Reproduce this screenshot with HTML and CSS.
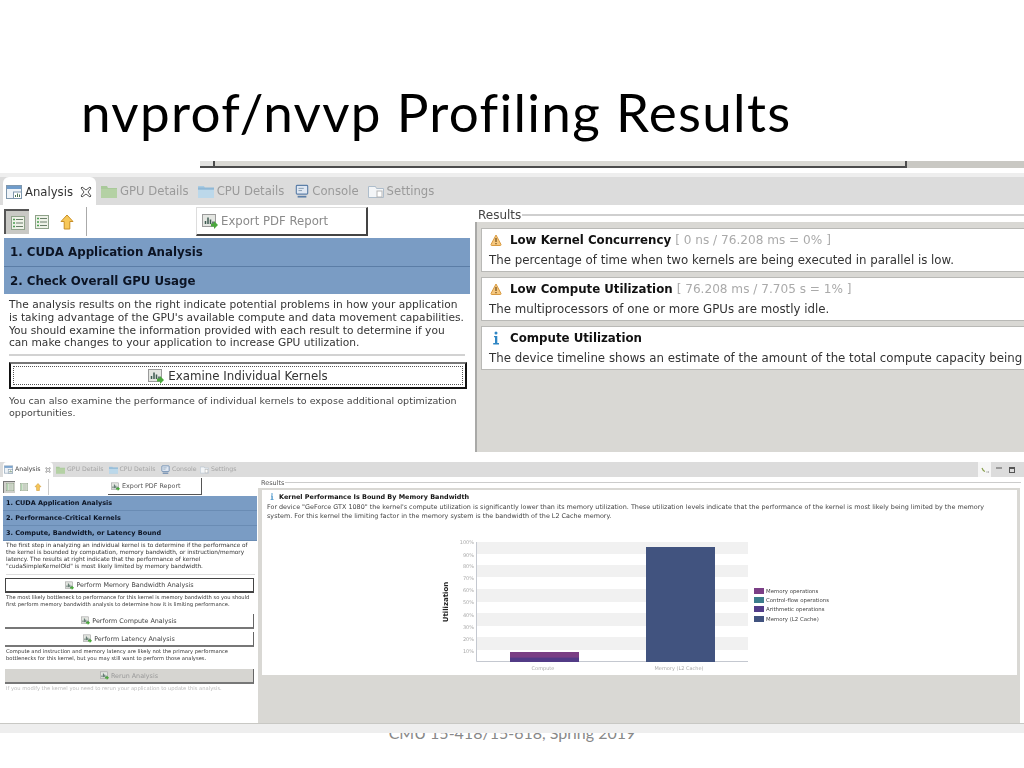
FILE: index.html
```html
<!DOCTYPE html>
<html lang="en">
<head>
<meta charset="utf-8">
<title>nvprof/nvvp Profiling Results</title>
<link rel="stylesheet" href="styles.css">
</head>
<body>
<svg class="defs" width="0" height="0" aria-hidden="true">
  <symbol id="i-chart" viewBox="0 0 16 16">
    <rect x="0.5" y="1.5" width="13" height="12" fill="#e4e6e2" stroke="#9a9a9a"/>
    <path d="M3.5 11V8M6 11V4.5M8.5 11V6.5M11 11V8.5" stroke="#3d5a50" stroke-width="1.5"/>
    <path d="M9 10.5h3V8l4 4-4 4v-2.5H9z" fill="#4aa83c"/>
  </symbol>
  <symbol id="i-tab" viewBox="0 0 16 16">
    <rect x="0.5" y="1.5" width="15" height="13" fill="#eef3f8" stroke="#7f97ad"/>
    <rect x="1" y="2" width="14" height="3" fill="#6f9ccb"/>
    <rect x="7.5" y="8" width="8" height="6.5" fill="#fff" stroke="#7f97ad"/>
    <path d="M9.5 13v-2M11.5 13V9.5M13.5 13v-2.500" stroke="#4a7050"/>
  </symbol>
  <symbol id="i-folder" viewBox="0 0 16 16">
    <path d="M0 3h6l1 2h9v10H0z" fill="#a9c99a"/>
    <rect x="0" y="6" width="16" height="9" fill="#b4d1a4"/>
  </symbol>
  <symbol id="i-cpu" viewBox="0 0 16 16">
    <path d="M0 3h6l1 2h9v10H0z" fill="#a9cbe2"/>
    <rect x="0" y="7" width="16" height="8" fill="#bcd8ea"/>
    <rect x="0" y="4.500" width="16" height="2" fill="#8fb8d6"/>
  </symbol>
  <symbol id="i-console" viewBox="0 0 16 16">
    <rect x="1.500" y="1.500" width="13" height="10" rx="1" fill="#dfe7f2" stroke="#5c7fa8" stroke-width="1.300"/>
    <path d="M4 5h6M4 7.500h4" stroke="#7f97ad"/>
    <path d="M3 14.500h10" stroke="#5c7fa8" stroke-width="2"/>
  </symbol>
  <symbol id="i-settings" viewBox="0 0 16 16">
    <path d="M0.500 3.500h7l1 2h7v9h-15z" fill="#f3f5f7" stroke="#aebdcb"/>
    <rect x="9" y="8" width="5" height="6" fill="#fff" stroke="#b5b5b5"/>
  </symbol>
  <symbol id="i-close" viewBox="0 0 12 12">
    <path d="M2 1l4 3 4-3 1 1-3 4 3 4-1 1-4-3-4 3-1-1 3-4-3-4z" fill="#fff" stroke="#555" stroke-width="1"/>
  </symbol>
  <symbol id="i-list" viewBox="0 0 14 14">
    <rect x="0.500" y="0.500" width="13" height="13" fill="#eef2e8" stroke="#8fa28a"/>
    <path d="M5 3.500h7M5 7h7M5 10.500h7" stroke="#6a7f6a"/>
    <path d="M2 3.500h2M2 7h2M2 10.500h2" stroke="#49a050" stroke-width="1.500"/>
  </symbol>
  <symbol id="i-up" viewBox="0 0 14 16">
    <path d="M7 1l6 6.500H9.800V15H4.200V7.500H1z" fill="#f7c85a" stroke="#c98f26"/>
  </symbol>
  <symbol id="i-warn" viewBox="0 0 12 12">
    <path d="M6 1l5 9.500a.8.8 0 0 1-.7 1H1.700a.8.8 0 0 1-.7-1z" fill="#f5c77e" stroke="#d99a3f"/>
    <path d="M6 4v4M6 9v1.300" stroke="#6e4a16" stroke-width="1.200"/>
  </symbol>
  <symbol id="i-info" viewBox="0 0 8 14">
    <circle cx="4" cy="2" r="1.500" fill="#2f86c4"/>
    <path d="M2 5h3.300v7H7v1.500H1.200V12H3V6.300H2z" fill="#2f86c4"/>
  </symbol>
</svg>

<main class="slide">
  <header class="title-block">
    <h1 class="title">nvprof/nvvp Profiling Results</h1>
  </header>

  <section class="shot-one">
    <div class="clip-strip">
      <div class="clip-bar"><span class="clip-thumb"></span></div>
      <div class="clip-rest"></div>
    </div>
    <div class="seam"></div>
    <div class="tabs">
      <div class="tab tab-active">
        <svg class="ti"><use href="#i-tab"/></svg><span>Analysis</span><svg class="tx"><use href="#i-close"/></svg>
      </div>
      <div class="tab t-gpu"><svg class="ti"><use href="#i-folder"/></svg><span>GPU Details</span></div>
      <div class="tab t-cpu"><svg class="ti"><use href="#i-cpu"/></svg><span>CPU Details</span></div>
      <div class="tab t-con"><svg class="ti"><use href="#i-console"/></svg><span>Console</span></div>
      <div class="tab t-set"><svg class="ti"><use href="#i-settings"/></svg><span>Settings</span></div>
    </div>
    <div class="body-one">
      <div class="left-one">
        <div class="tools">
          <span class="tool-on"><svg class="tool-i"><use href="#i-list"/></svg></span>
          <svg class="tool-i tool-b"><use href="#i-list"/></svg>
          <svg class="tool-i tool-c"><use href="#i-up"/></svg>
          <span class="tool-sep"></span>
          <div class="export"><svg class="ex-i"><use href="#i-chart"/></svg><span>Export PDF Report</span></div>
        </div>
        <div class="step step-a">1. CUDA Application Analysis</div>
        <div class="step step-b">2. Check Overall GPU Usage</div>
        <p class="para">The analysis results on the right indicate potential problems in how your application<br>is taking advantage of the GPU's available compute and data movement capabilities.<br>You should examine the information provided with each result to determine if you<br>can make changes to your application to increase GPU utilization.</p>
        <div class="rule"></div>
        <div class="big-btn"><div class="big-in"><svg class="ex-i"><use href="#i-chart"/></svg><span>Examine Individual Kernels</span></div></div>
        <p class="para small">You can also examine the performance of individual kernels to expose additional optimization<br>opportunities.</p>
      </div>
      <div class="right-one">
        <div class="legend-row"><span class="legend-t">Results</span><span class="legend-l"></span></div>
        <div class="well">
          <article class="card">
            <div class="card-h"><svg class="warn"><use href="#i-warn"/></svg><b>Low Kernel Concurrency</b><span class="stat">[ 0 ns / 76.208 ms = 0% ]</span></div>
            <div class="card-t">The percentage of time when two kernels are being executed in parallel is low.</div>
          </article>
          <article class="card">
            <div class="card-h"><svg class="warn"><use href="#i-warn"/></svg><b>Low Compute Utilization</b><span class="stat">[ 76.208 ms / 7.705 s = 1% ]</span></div>
            <div class="card-t">The multiprocessors of one or more GPUs are mostly idle.</div>
          </article>
          <article class="card">
            <div class="card-h"><svg class="warn info"><use href="#i-info"/></svg><b>Compute Utilization</b></div>
            <div class="card-t">The device timeline shows an estimate of the amount of the total compute capacity being</div>
          </article>
        </div>
      </div>
    </div>
  </section>

  <section class="shot-two">
    <div class="tabs2">
      <div class="tab2 tab2-active"><svg class="ti2"><use href="#i-tab"/></svg><span>Analysis</span><svg class="tx2"><use href="#i-close"/></svg></div>
      <div class="tab2 w-a"><svg class="ti2"><use href="#i-folder"/></svg><span>GPU Details</span></div>
      <div class="tab2 w-a"><svg class="ti2"><use href="#i-cpu"/></svg><span>CPU Details</span></div>
      <div class="tab2 w-b"><svg class="ti2"><use href="#i-console"/></svg><span>Console</span></div>
      <div class="tab2"><svg class="ti2"><use href="#i-settings"/></svg><span>Settings</span></div>
      <div class="view-acts">
        <span class="act-on"><svg class="act-i" viewBox="0 0 8 6"><path d="M1 1q1 3 3 3.500" fill="none" stroke="#8aa04e" stroke-width="1.200"/><path d="M5.500 5h1M7 5h1" stroke="#666" stroke-width=".8"/></svg></span>
        <span class="act-min"></span>
        <span class="act-max"></span>
      </div>
    </div>
    <div class="body-two">
      <div class="left-two">
        <div class="tools2">
          <span class="tool2-on"><svg class="tool2-i"><use href="#i-list"/></svg></span>
          <svg class="tool2-i t2b"><use href="#i-list"/></svg>
          <svg class="tool2-i t2c"><use href="#i-up"/></svg>
          <span class="tool2-sep"></span>
          <div class="export2"><svg class="ic2"><use href="#i-chart"/></svg><span>Export PDF Report</span></div>
        </div>
        <div class="step2">1. CUDA Application Analysis</div>
        <div class="step2">2. Performance-Critical Kernels</div>
        <div class="step2">3. Compute, Bandwidth, or Latency Bound</div>
        <p class="p2 p2-first">The first step in analyzing an individual kernel is to determine if the performance of<br>the kernel is bounded by computation, memory bandwidth, or instruction/memory<br>latency. The results at right indicate that the performance of kernel<br>"cudaSimpleKernelOld" is most likely limited by memory bandwidth.</p>
        <div class="rule2"></div>
        <div class="btn2 btn2-focus"><svg class="ic2"><use href="#i-chart"/></svg><span>Perform Memory Bandwidth Analysis</span></div>
        <p class="p2 p2-b">The most likely bottleneck to performance for this kernel is memory bandwidth so you should<br>first perform memory bandwidth analysis to determine how it is limiting performance.</p>
        <div class="btn2 btn2-c"><svg class="ic2"><use href="#i-chart"/></svg><span>Perform Compute Analysis</span></div>
        <div class="btn2 btn2-d"><svg class="ic2"><use href="#i-chart"/></svg><span>Perform Latency Analysis</span></div>
        <p class="p2 p2-c">Compute and instruction and memory latency are likely not the primary performance<br>bottlenecks for this kernel, but you may still want to perform those analyses.</p>
        <div class="btn2 btn2-off"><svg class="ic2"><use href="#i-chart"/></svg><span>Rerun Analysis</span></div>
        <p class="p2 p2-off">If you modify the kernel you need to rerun your application to update this analysis.</p>
      </div>
      <div class="right-two">
        <div class="legend2"><span class="legend2-t">Results</span><span class="legend2-l"></span></div>
        <div class="well2">
          <article class="card2">
            <div class="card2-h"><svg class="info2"><use href="#i-info"/></svg><b>Kernel Performance Is Bound By Memory Bandwidth</b></div>
            <p class="card2-t">For device "GeForce GTX 1080" the kernel's compute utilization is significantly lower than its memory utilization. These utilization levels indicate that the performance of the kernel is most likely being limited by the memory<br>system. For this kernel the limiting factor in the memory system is the bandwidth of the L2 Cache memory.</p>
            <svg class="chart" viewBox="0 0 420 140" width="420" height="140">
              <g fill="#f1f1f1">
                <rect x="47" y="12" width="271" height="12"/>
                <rect x="47" y="35" width="271" height="12"/>
                <rect x="47" y="59" width="271" height="13"/>
                <rect x="47" y="83" width="271" height="13"/>
                <rect x="47" y="107" width="271" height="13"/>
              </g>
              <path d="M46.500 12v119.500H318" fill="none" stroke="#c4c8d0"/>
              <g class="tick" text-anchor="end">
                <text x="44" y="14">100%</text><text x="44" y="27">90%</text><text x="44" y="38">80%</text><text x="44" y="50">70%</text><text x="44" y="62">60%</text><text x="44" y="74">50%</text><text x="44" y="87">40%</text><text x="44" y="99">30%</text><text x="44" y="111">20%</text><text x="44" y="123">10%</text>
              </g>
              <rect x="80" y="122" width="69" height="10" fill="#6a3d86"/>
              <rect x="80" y="122" width="69" height="5" fill="#7a3f84"/>
              <rect x="80" y="128" width="69" height="4" fill="#523b86"/>
              <rect x="216" y="17" width="69" height="115" fill="#41537f"/>
              <text class="axis" transform="translate(18 72) rotate(-90)" text-anchor="middle">Utilization</text>
              <text class="tick" x="113" y="140" text-anchor="middle">Compute</text>
              <text class="tick" x="249" y="140" text-anchor="middle">Memory (L2 Cache)</text>
              <rect x="324" y="58" width="10" height="6" fill="#7b3f86"/>
              <rect x="324" y="67" width="10" height="6" fill="#3c7d8c"/>
              <rect x="324" y="76" width="10" height="6" fill="#533d8a"/>
              <rect x="324" y="86" width="10" height="6" fill="#41537f"/>
              <g class="leg">
                <text x="336" y="63">Memory operations</text>
                <text x="336" y="72">Control-flow operations</text>
                <text x="336" y="81">Arithmetic operations</text>
                <text x="336" y="91">Memory (L2 Cache)</text>
              </g>
            </svg>
          </article>
        </div>
      </div>
    </div>
    <div class="shot-foot"></div>
  </section>

  <footer class="foot"><span class="foot-t">CMU 15-418/15-618, Spring 2019</span></footer>
</main>
</body>
</html>
```

FILE: styles.css
```css
* { box-sizing: border-box; }
html, body { margin: 0; padding: 0; background: #fff; }
.defs { display: block; width: 0; height: 0; overflow: hidden; }
.slide { width: 1024px; height: 768px; overflow: hidden; background: #fff; font-family: "DejaVu Sans", sans-serif; }
p { margin: 0; }

.title-block { height: 158px; padding: 79px 0 0 81px; }
.title { margin: 0; font: 400 53px/66px "Lato", sans-serif; font-variant-ligatures: none; letter-spacing: 1.3px; color: #000; white-space: nowrap; }

.shot-one { height: 294px; background: #fff; filter: blur(.4px); overflow: hidden; }
.clip-strip { height: 10px; display: flex; padding: 3px 0 0 200px; }
.clip-bar { width: 707px; height: 7px; background: #dad9d4; border-bottom: 2px solid #4c4c4c; border-right: 2px solid #4c4c4c; }
.clip-thumb { display: block; width: 15px; height: 5px; border-right: 2px solid #4c4c4c; background: #e2e2e0; }
.clip-rest { flex: 1; height: 7px; background: #c9c8c3; }
.seam { height: 9px; padding-top: 5px; background-clip: content-box; background-color: #eeeeee; }

.tabs { height: 28px; display: flex; background: #dcdcdc; font-size: 11.65px; color: #9a9a9a; align-items: center; padding-left: 3px; }
.tab { display: flex; align-items: center; gap: 3px; white-space: nowrap; }
.tab-active { width: 93px; height: 28px; padding: 1px 0 0 3px; background: #fff; border-radius: 6px 6px 0 0; color: #333; }
.ti { width: 16px; height: 16px; flex: none; }
.tx { width: 12px; height: 12px; margin-left: 4px; flex: none; }
.t-gpu { margin-left: 5px; }
.t-cpu { margin-left: 9px; }
.t-con { margin-left: 11px; }
.t-set { margin-left: 9px; }
.t-con .ti { width: 14px; }

.body-one { height: 247px; display: flex; }
.left-one { width: 474px; padding: 0 4px; }
.tools { height: 33px; display: flex; align-items: center; }
.tool-on { width: 25px; height: 25px; background: #c9c9c5; border-top: 2px solid #555; border-left: 2px solid #555; display: flex; align-items: center; justify-content: center; }
.tool-i { width: 14px; height: 14px; flex: none; }
.tool-b { margin-left: 6px; }
.tool-c { margin-left: 11px; height: 16px; }
.tool-sep { width: 1px; height: 29px; background: #aaa; margin-left: 12px; }
.export { width: 172px; height: 29px; margin-left: 109px; background: #fff; border-right: 2px solid #444; border-bottom: 2px solid #444; border-top: 1px solid #ddd; border-left: 1px solid #ddd; display: flex; align-items: center; gap: 3px; padding-left: 5px; font-size: 11.7px; color: #8a8a8a; }
.ex-i { width: 16px; height: 16px; flex: none; }

.step { background: #7a9cc4; color: #0c1424; font-weight: 700; font-size: 11.8px; padding-left: 6px; display: flex; align-items: center; }
.step-a { height: 29px; border-bottom: 1px solid #5b7da6; }
.step-b { height: 27px; }
.para { padding: 5px 0 0 5px; font-size: 10.65px; line-height: 12.8px; color: #333; white-space: nowrap; }
.rule { height: 2px; background: #d2d2d2; margin: 4px 5px 6px 5px; }
.big-btn { width: 458px; height: 27px; margin-left: 5px; border: 2px solid #111; border-top-color: #777; background: #fff; padding: 2px; }
.big-in { height: 100%; border: 1px dotted #555; display: flex; align-items: center; justify-content: center; gap: 4px; font-size: 11.8px; color: #333; }
.small { font-size: 9.55px; line-height: 11.8px; padding-top: 6px; color: #444; }

.right-one { flex: 1; min-width: 0; overflow: hidden; }
.legend-row { height: 17px; display: flex; align-items: center; font-size: 12px; color: #444; padding: 2px 0 0 4px; }
.legend-l { flex: 1; height: 2px; background: #cfcfcf; margin-left: 1px; }
.well { height: 230px; background: #d9d8d4; border-left: 2px solid #a9a9a7; margin-left: 1px; padding: 6px 0 0 4px; display: flex; flex-direction: column; gap: 5px; }
.card { width: 600px; height: 44px; background: #fff; border: 1px solid #b9b9b6; padding-left: 7px; flex: none; }
.card-h { display: flex; align-items: center; height: 21px; font-size: 11.8px; color: #111; white-space: nowrap; }
.warn { width: 12px; height: 12px; margin: 0 8px 0 1px; flex: none; }
.info { width: 8px; height: 14px; margin: 0 10px 0 3px; }
.stat { color: #aaa; font-weight: 400; margin-left: 4px; font-size: 12.1px; }
.card-t { font-size: 11.8px; line-height: 20px; color: #333; white-space: nowrap; }

.shot-two { height: 272px; margin-top: 9px; background: #fff; position: relative; z-index: 1; filter: blur(.5px); text-rendering: geometricPrecision; }
.tabs2 { height: 15px; display: flex; align-items: center; background: #dcdcdc; font-size: 6.2px; color: #a5a5a5; padding-left: 3px; position: relative; top: 1px; }
.tab2 { display: flex; align-items: center; gap: 2px; white-space: nowrap; width: 52.500px; }
.tab2.w-b { width: 39px; }
.tab2-active { width: 50px; height: 15px; background: #fff; color: #444; border-radius: 4px 4px 0 0; padding-left: 1px; margin-right: 3px; }
.ti2 { width: 9px; height: 9px; flex: none; }
.tx2 { width: 6px; height: 6px; margin-left: 2px; flex: none; }
.view-acts { margin-left: auto; display: flex; align-items: center; height: 15px; padding-right: 9px; }
.act-on { width: 13px; height: 15px; background: #f6f6f6; display: flex; align-items: center; justify-content: center; }
.act-i { width: 8px; height: 6px; }
.act-min { width: 6px; height: 2px; background: #999; margin: 0 0 3px 5px; }
.act-max { width: 6px; height: 6px; border: 1px solid #555; border-top-width: 2px; margin-left: 7px; }

.body-two { height: 246px; margin-top: 1px; display: flex; }
.left-two { width: 258px; padding: 0 1px 0 3px; border-radius: 0 0 0 4px; }
.tools2 { height: 19px; display: flex; align-items: center; }
.tool2-on { width: 12px; height: 12px; background: #cfcfca; border-top: 1px solid #777; border-left: 1px solid #777; display: flex; align-items: center; justify-content: center; }
.tool2-i { width: 8px; height: 8px; flex: none; }
.t2b { margin-left: 5px; }
.t2c { margin-left: 6px; }
.tool2-sep { width: 1px; height: 16px; background: #ccc; margin-left: 6px; }
.export2 { width: 94px; height: 17px; margin-left: 59px; display: flex; align-items: center; gap: 2px; padding-left: 3px; font-size: 6.4px; color: #555; background: #fff; border-right: 1px solid #555; border-bottom: 1px solid #555; }
.ic2 { width: 9px; height: 9px; flex: none; }

.step2 { height: 15px; background: #7a9cc4; border-bottom: 1px solid #6a8cb4; color: #0c1424; font-weight: 700; font-size: 6.5px; padding-left: 3px; display: flex; align-items: center; white-space: nowrap; }
.p2 { font-size: 5.78px; line-height: 7px; color: #333; padding-left: 3px; white-space: nowrap; }
.p2-first { padding-top: 2px; }
.rule2 { height: 1px; background: #ddd; margin: 3px 2px 3px 3px; }
.btn2 { width: 249px; height: 15px; margin-left: 2px; display: flex; align-items: center; justify-content: center; gap: 2px; font-size: 6.38px; color: #444; background: #fff; border-right: 1px solid #666; border-bottom: 2px solid #777; white-space: nowrap; }
.btn2-focus { height: 15px; border: 1px solid #444; border-bottom-width: 2px; }
.p2-b { padding-top: 2px; font-size: 5.2px; }
.btn2-c { margin-top: 5px; }
.btn2-d { margin-top: 3px; }
.p2-c { padding-top: 2px; font-size: 5.2px; }
.btn2-off { margin-top: 6px; background: #d6d5d1; color: #999; }
.p2-off { padding-top: 2px; font-size: 5.2px; color: #bbb; }

.right-two { flex: 1; min-width: 0; }
.legend2 { height: 11px; display: flex; align-items: center; font-size: 6.5px; color: #555; padding-left: 3px; }
.legend2-l { width: 736px; height: 1px; background: #ccc; margin-left: 1px; }
.well2 { width: 762px; height: 235px; background: #d9d8d4; padding: 2px 3px 0 4px; }
.card2 { height: 185px; background: #fff; }
.card2-h { height: 13px; display: flex; align-items: center; font-size: 6.45px; color: #111; padding-left: 8px; white-space: nowrap; }
.info2 { width: 4px; height: 7px; margin-right: 5px; flex: none; }
.card2-t { padding: 0 0 0 5px; font-size: 6.42px; line-height: 8.5px; color: #444; white-space: nowrap; }
.chart { display: block; margin: 10px 0 0 168px; overflow: visible; }
.tick { font-size: 5px; fill: #aaa; }
.axis { font-size: 7px; font-weight: 700; fill: #222; }
.leg { font-size: 5.4px; fill: #444; }

.shot-foot { height: 10px; background: #eeeeee; border-top: 1px solid #c8c8c4; }
.foot { height: 35px; overflow: hidden; text-align: center; }
.foot-t { display: block; margin-top: -10px; font: 400 16px/20px "Lato", sans-serif; color: #888; white-space: nowrap; }
```
